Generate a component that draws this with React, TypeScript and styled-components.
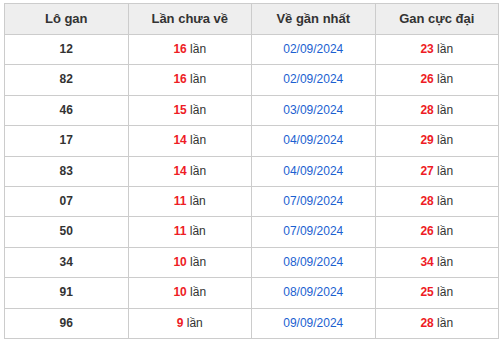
import styled, { createGlobalStyle } from "styled-components"

const GlobalStyle = createGlobalStyle`
  html, body {
    margin: 0;
    padding: 0;
    background: #fff;
  }
  body {
    font-family: "Liberation Sans", Arial, sans-serif;
    color: #333;
  }
`

const Wrapper = styled.div`
  padding: 3px 0 0 4px;
`

const Table = styled.table`
  width: 495px;
  border-collapse: collapse;
  table-layout: fixed;
`

const HeadCell = styled.th`
  width: 25%;
  background: #eeeeee;
  border: 1px solid #cccccc;
  padding: 7px 4px;
  font-size: 13px;
  line-height: 16px;
  font-weight: bold;
  color: #333;
  text-align: center;
`

const Cell = styled.td`
  border: 1px solid #cccccc;
  padding: 7px 4px;
  font-size: 12px;
  line-height: 15.4px;
  text-align: center;
  color: #333;
`

const Number = styled.span`
  font-weight: bold;
`

const Count = styled.span`
  color: #ee1c25;
  font-weight: bold;
`

const DateText = styled.span`
  color: #1b5fd1;
`

type Row = { lo: string; miss: number; date: string; max: number }

const rows: Row[] = [
  { lo: "12", miss: 16, date: "02/09/2024", max: 23 },
  { lo: "82", miss: 16, date: "02/09/2024", max: 26 },
  { lo: "46", miss: 15, date: "03/09/2024", max: 28 },
  { lo: "17", miss: 14, date: "04/09/2024", max: 29 },
  { lo: "83", miss: 14, date: "04/09/2024", max: 27 },
  { lo: "07", miss: 11, date: "07/09/2024", max: 28 },
  { lo: "50", miss: 11, date: "07/09/2024", max: 26 },
  { lo: "34", miss: 10, date: "08/09/2024", max: 34 },
  { lo: "91", miss: 10, date: "08/09/2024", max: 25 },
  { lo: "96", miss: 9, date: "09/09/2024", max: 28 },
]

export default function App() {
  return (
    <Wrapper>
      <GlobalStyle />
      <Table>
        <thead>
          <tr>
            <HeadCell>Lô gan</HeadCell>
            <HeadCell>Lần chưa về</HeadCell>
            <HeadCell>Về gần nhất</HeadCell>
            <HeadCell>Gan cực đại</HeadCell>
          </tr>
        </thead>
        <tbody>
          {rows.map((r) => (
            <tr key={r.lo}>
              <Cell>
                <Number>{r.lo}</Number>
              </Cell>
              <Cell>
                <Count>{r.miss}</Count> lần
              </Cell>
              <Cell>
                <DateText>{r.date}</DateText>
              </Cell>
              <Cell>
                <Count>{r.max}</Count> lần
              </Cell>
            </tr>
          ))}
        </tbody>
      </Table>
    </Wrapper>
  )
}
